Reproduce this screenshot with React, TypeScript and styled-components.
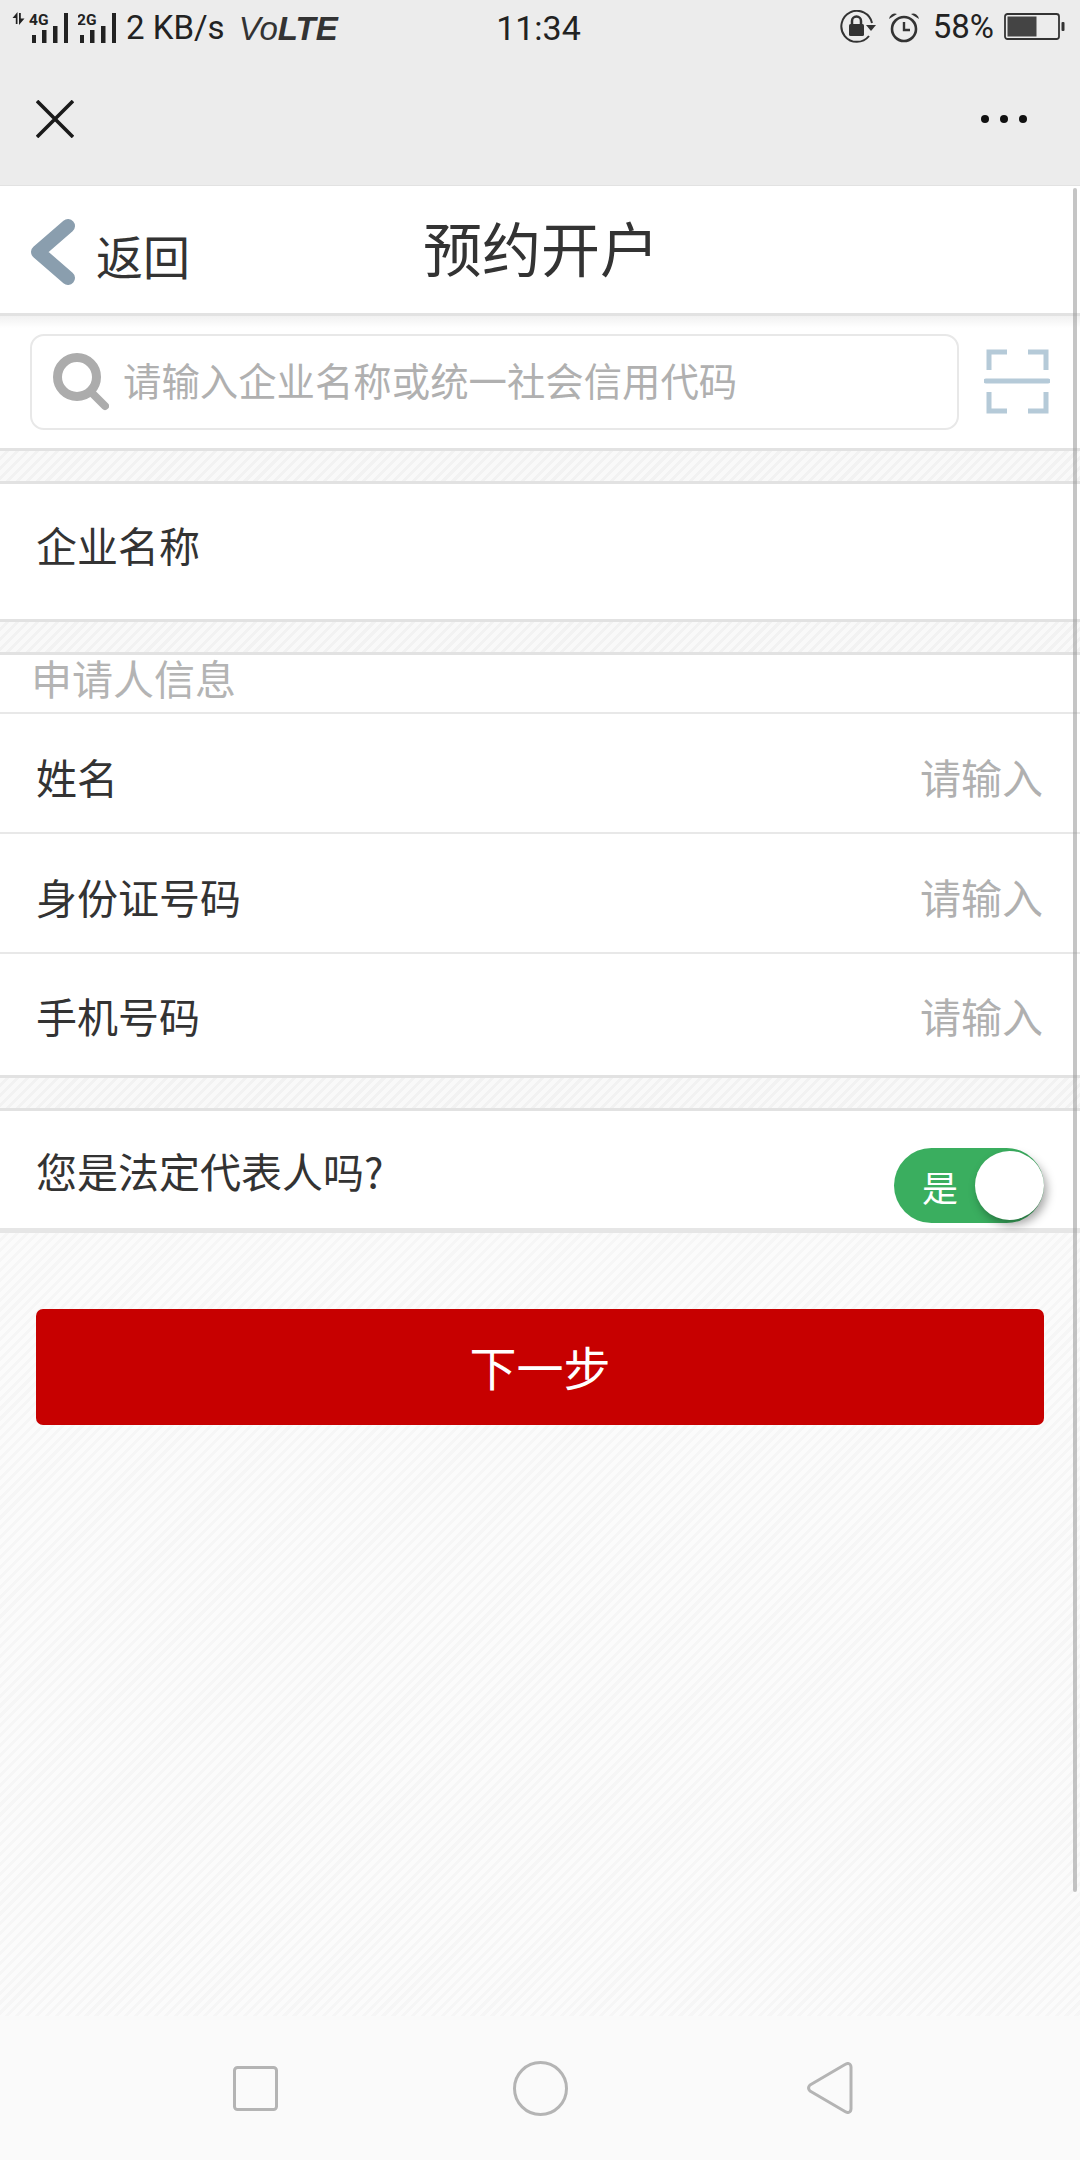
import React from "react";
import styled, { createGlobalStyle } from "styled-components";

const Global = createGlobalStyle`
  html, body { margin: 0; padding: 0; background: #fafafa; }
  * { box-sizing: border-box; }
`;

const cjk = `"Noto Sans CJK SC", "Noto Sans", sans-serif`;
const stripes = `repeating-linear-gradient(135deg, #f9f9f9 0 4px, #f2f2f2 4px 7px)`;

const Page = styled.div`
  position: relative;
  width: 1080px;
  height: 2160px;
  display: flex;
  flex-direction: column;
  overflow: hidden;
  font-family: ${cjk};
  background: #fff;
`;

const Chrome = styled.div`
  height: 186px;
  background: #ececec;
  border-bottom: 1px solid #e2e2e2;
  display: flex;
  flex-direction: column;
`;

const StatusBar = styled.div`
  height: 62px;
  padding: 0 15px 9px 12px;
  display: grid;
  grid-template-columns: 1fr auto 1fr;
  align-items: center;
  font-family: Roboto, "Liberation Sans", sans-serif;
  color: #222;
`;

const StatusLeft = styled.div`
  display: flex;
  align-items: center;
  height: 50px;
`;

const StatusRight = styled.div`
  display: flex;
  align-items: center;
  justify-content: flex-end;
  height: 50px;
`;

const Speed = styled.span`
  font-size: 33px;
  margin-left: 8px;
  line-height: 1;
  padding-top: 1px;
  white-space: nowrap;
`;

const Volte = styled.span`
  font-family: "Liberation Sans", sans-serif;
  font-style: italic;
  font-size: 33px;
  margin-left: 14px;
  color: #333;
  line-height: 1;
  padding-top: 3px;
  white-space: nowrap;
  b { font-weight: 700; }
`;

const Clock = styled.span`
  font-size: 34px;
  line-height: 1;
  padding-top: 2px;
`;

const Percent = styled.span`
  font-size: 33px;
  line-height: 1;
  margin: 0 10px 0 13px;
`;

const TitleBar = styled.div`
  flex: 1;
  display: flex;
  align-items: center;
  justify-content: space-between;
  padding: 0 53px 10px 36px;
`;

const Nav = styled.div`
  height: 130px;
  display: grid;
  grid-template-columns: 1fr auto 1fr;
  align-items: center;
  padding: 0 30px;
  border-bottom: 3px solid #e2e2e2;
  background: #fff;
`;

const Back = styled.div`
  display: flex;
  align-items: center;
  gap: 20px;
  color: #333;
  font-size: 47px;
  line-height: 1;
  span { padding-top: 10px; }
  svg { margin-top: 5px; }
`;

const Title = styled.div`
  font-size: 59px;
  line-height: 1;
  color: #333;
  margin: -6px 0 0 2px;
`;

const SearchArea = styled.div`
  height: 132px;
  padding: 18px 30px 0;
  display: flex;
  gap: 25px;
  align-items: flex-start;
  background: linear-gradient(#f1f1f1, #fff 12px);
`;

const SearchBox = styled.div`
  width: 930px;
  height: 96px;
  border: 2.5px solid #e8e8e8;
  border-radius: 14px;
  background: #fff;
  display: flex;
  align-items: center;
  padding: 0 0 0 21px;
  gap: 14px;
`;

const SearchText = styled.span`
  font-size: 38.4px;
  line-height: 1;
  color: #b0b0b0;
  white-space: nowrap;
  padding-bottom: 6px;
`;

const ScanButton = styled.div`
  margin-top: 14px;
  display: flex;
`;

const Band = styled.div`
  height: 36px;
  background: ${stripes};
  border-top: 3px solid #e2e2e2;
  border-bottom: 3px solid #e2e2e2;
`;

const Row = styled.div<{ $h: number; $top?: number; $bottom?: number }>`
  height: ${(p) => p.$h}px;
  padding: ${(p) => p.$top ?? 0}px 37px ${(p) => p.$bottom ?? 0}px 36px;
  display: flex;
  align-items: center;
  justify-content: space-between;
  background: #fff;
  font-size: 41px;
  color: #333;
`;

const FieldRow = styled(Row)`
  border-bottom: 2px solid #e8e8e8;
`;

const Label = styled.span`
  line-height: 1;
  white-space: nowrap;
`;

const Hint = styled.span`
  line-height: 1;
  color: #b0b0b0;
`;

const SectionTitle = styled.div`
  height: 59px;
  padding: 0 0 12px 31px;
  display: flex;
  align-items: center;
  font-size: 41px;
  line-height: 1;
  color: #b4b4b4;
  border-bottom: 2.5px solid #e8e8e8;
  background: #fff;
`;

const ToggleRow = styled(Row)`
  border-bottom: 5px solid #e6e6e6;
`;

const Toggle = styled.div`
  width: 150px;
  height: 75px;
  margin: 30px -1px 0 0;
  border-radius: 38px;
  background: #3aae5f;
  display: flex;
  align-items: center;
  justify-content: space-between;
  padding: 0 0 0 28px;
  color: #fff;
  font-size: 36px;
  line-height: 1;
`;

const Knob = styled.div`
  width: 69px;
  height: 69px;
  border-radius: 50%;
  background: #fff;
  box-shadow: 3px 5px 10px rgba(0, 0, 0, 0.35);
`;

const Main = styled.div`
  flex: 1;
  padding: 76px 36px 0;
  background: repeating-linear-gradient(135deg, #fbfbfb 0 4px, #f6f6f6 4px 7px);
`;

const NextButton = styled.div`
  height: 116px;
  border-radius: 7px;
  background: #c70000;
  color: #fff;
  font-size: 47px;
  line-height: 1;
  display: flex;
  align-items: center;
  justify-content: center;
  padding-bottom: 4px;
`;

const SystemNav = styled.div`
  height: 144px;
  background: #fafafa;
  display: grid;
  grid-template-columns: 286px 284px 296px;
  align-items: center;
  justify-items: center;
  padding: 0 102px 0 112px;
`;

const Scrollbar = styled.div`
  position: absolute;
  top: 188px;
  right: 3px;
  width: 4px;
  height: 1704px;
  border-radius: 2px;
  background: rgba(150, 150, 150, 0.55);
`;

function Signal({ label, arrows }: { label: string; arrows?: boolean }) {
  const w = arrows ? 58 : 40;
  const o = arrows ? 18 : 0;
  return (
    <svg width={w} height="34" viewBox={`0 0 ${w} 34`} fill="#222" style={{ marginLeft: arrows ? 0 : 8 }}>
      {arrows && <path d="M5.5 2v12H3.8V8H0.5zM7 3v12l5.5-6.5H8.8V3z" />}
      <text x={o - 1} y="15" fontFamily="Roboto, sans-serif" fontWeight="700" fontSize="15.5">{label}</text>
      <rect x={o + 2} y="25" width="4" height="8" />
      <rect x={o + 12} y="20" width="4.5" height="13" />
      <rect x={o + 23} y="16" width="4.5" height="17" />
      <rect x={o + 34} y="3" width="4" height="30" />
    </svg>
  );
}

export default function App() {
  return (
    <Page>
      <Global />
      <Chrome>
        <StatusBar>
          <StatusLeft>
            <Signal label="4G" arrows />
            <Signal label="2G" />
            <Speed>2 KB/s</Speed>
            <Volte>Vo<b>LTE</b></Volte>
          </StatusLeft>
          <Clock>11:34</Clock>
          <StatusRight>
            <svg width="36" height="34" viewBox="0 0 36 34" fill="none">
              <path d="M32 13A15.5 15.5 0 1 0 29 26" stroke="#333" strokeWidth="2" />
              <path d="M26 15h10l-5 6z" fill="#333" />
              <rect x="9" y="14" width="15" height="12" rx="1.5" fill="#333" />
              <path d="M12 14v-3a4.5 4.5 0 0 1 9 0v3" stroke="#333" strokeWidth="2.5" />
            </svg>
            <svg width="32" height="32" viewBox="0 0 32 32" fill="none" style={{ marginLeft: 12 }}>
              <circle cx="16" cy="18" r="12" stroke="#333" strokeWidth="2.6" />
              <path d="M16 11v8h6" stroke="#333" strokeWidth="2.4" />
              <path d="M1 8a6 6 0 0 1 8-5zM31 8a6 6 0 0 0-8-5z" fill="#333" />
            </svg>
            <Percent>58%</Percent>
            <svg width="61" height="28" viewBox="0 0 61 28" fill="none">
              <rect x="1" y="1" width="54" height="25" rx="2.5" stroke="#333" strokeWidth="1.8" />
              <rect x="3.5" y="3.5" width="29" height="20" fill="#444" />
              <rect x="57.5" y="9" width="3" height="9" rx="1" fill="#333" />
            </svg>
          </StatusRight>
        </StatusBar>
        <TitleBar>
          <svg width="38" height="38" viewBox="0 0 38 38" stroke="#1a1a1a" strokeWidth="3.6">
            <path d="M1 1l36 36M37 1L1 37" />
          </svg>
          <svg width="46" height="10" viewBox="0 0 46 10" fill="#111">
            <circle cx="4" cy="5" r="4" />
            <circle cx="23" cy="5" r="4" />
            <circle cx="42" cy="5" r="4" />
          </svg>
        </TitleBar>
      </Chrome>

      <Nav>
        <Back>
          <svg width="46" height="68" viewBox="0 0 46 68" fill="none" stroke="#8a9eae" strokeWidth="14" strokeLinecap="round" strokeLinejoin="round">
            <path d="M38 8L8 34l30 26" />
          </svg>
          <span>返回</span>
        </Back>
        <Title>预约开户</Title>
        <div />
      </Nav>

      <SearchArea>
        <SearchBox>
          <svg width="56" height="58" viewBox="0 0 56 58" fill="none" stroke="#acacac">
            <circle cx="24" cy="24" r="19.5" strokeWidth="9" />
            <path d="M38 39l14 14" strokeWidth="8" strokeLinecap="round" />
          </svg>
          <SearchText>请输入企业名称或统一社会信用代码</SearchText>
        </SearchBox>
        <ScanButton>
          <svg width="66" height="66" viewBox="0 0 66 66" fill="none" stroke="#b5cad8" strokeWidth="5">
            <path d="M23 4H5v18M44 4h18v18M23 63H5V44M44 63h18V44" />
            <path d="M2 33h62" strokeLinecap="round" />
          </svg>
        </ScanButton>
      </SearchArea>

      <Band />
      <Row $h={135} $bottom={14}>
        <Label>企业名称</Label>
      </Row>
      <Band />
      <SectionTitle>申请人信息</SectionTitle>
      <FieldRow $h={120} $top={6}>
        <Label>姓名</Label>
        <Hint>请输入</Hint>
      </FieldRow>
      <FieldRow $h={120} $top={6}>
        <Label>身份证号码</Label>
        <Hint>请输入</Hint>
      </FieldRow>
      <Row $h={121} $top={2}>
        <Label>手机号码</Label>
        <Hint>请输入</Hint>
      </Row>
      <Band />
      <ToggleRow $h={122} $top={2}>
        <Label>您是法定代表人吗?</Label>
        <Toggle>
          是
          <Knob />
        </Toggle>
      </ToggleRow>

      <Main>
        <NextButton>下一步</NextButton>
      </Main>

      <SystemNav>
        <svg width="45" height="45" viewBox="0 0 45 45" fill="none" stroke="#b4b4b4" strokeWidth="3">
          <rect x="1.5" y="1.5" width="42" height="42" rx="3" />
        </svg>
        <svg width="55" height="55" viewBox="0 0 55 55" fill="none" stroke="#b4b4b4" strokeWidth="3">
          <circle cx="27.5" cy="27.5" r="26" />
        </svg>
        <svg width="46" height="52" viewBox="0 0 46 52" fill="none" stroke="#b4b4b4" strokeWidth="3" strokeLinejoin="round">
          <path d="M38 2.5c3-2 6-1 6 3v41c0 4-3 5-6 3L3 29c-2-2-2-4 0-6z" />
        </svg>
      </SystemNav>
      <Scrollbar />
    </Page>
  );
}
